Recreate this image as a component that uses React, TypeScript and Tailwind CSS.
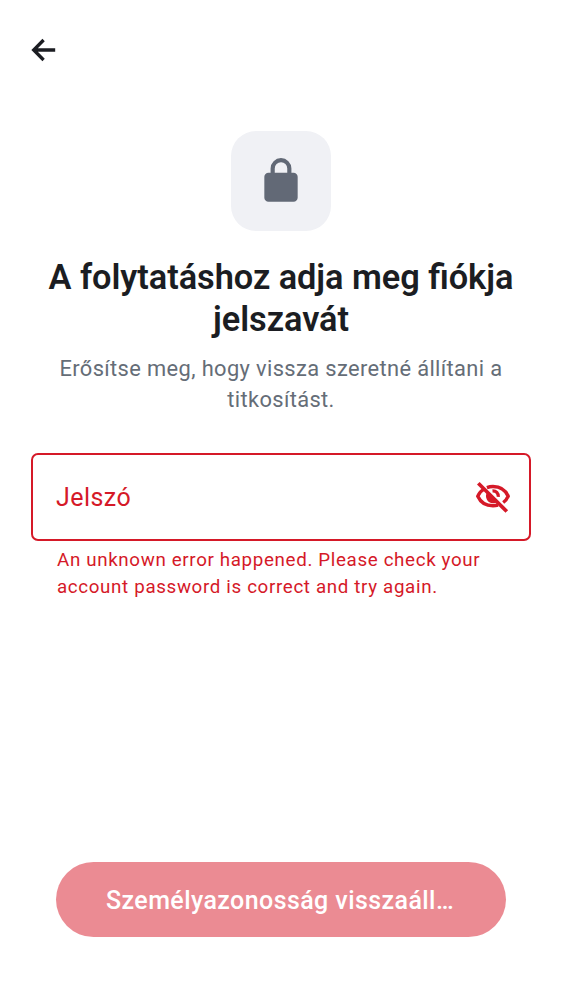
import { useState } from "react";

function BackIcon() {
  return (
    <svg width="38" height="38" viewBox="0 0 38 38" fill="none" stroke="currentColor" strokeWidth="3.3" strokeLinecap="butt" strokeLinejoin="miter" aria-hidden="true">
      <path d="M31.2 19H10M19.6 9 9.7 19l9.9 10" />
    </svg>
  );
}

function LockIcon() {
  return (
    <svg width="50" height="50" viewBox="0 0 24 24" fill="currentColor" aria-hidden="true">
      <path d="M6 22q-.825 0-1.412-.587A1.93 1.93 0 0 1 4 20V10q0-.825.588-1.412A1.93 1.93 0 0 1 6 8h1V6q0-2.075 1.463-3.537Q9.925 1 12 1t3.537 1.463Q17 3.925 17 6v2h1q.825 0 1.413.588Q20 9.175 20 10v10q0 .825-.587 1.413A1.93 1.93 0 0 1 18 22zM9 8h6V6q0-1.25-.875-2.125A2.9 2.9 0 0 0 12 3q-1.25 0-2.125.875A2.9 2.9 0 0 0 9 6z" />
    </svg>
  );
}

function HiddenIcon() {
  return (
    <svg width="38" height="38" viewBox="0 0 38 38" fill="none" stroke="currentColor" aria-hidden="true">
      <path strokeWidth="3.4" d="M10.3 10.9C7.2 12.7 5 15.2 3.8 18.2 6.4 24 12 27.7 19 27.7q2.6 0 5-.7M12.9 9.6Q15.8 8.5 19 8.5c7 0 12.6 3.8 15.2 9.7-1 2.5-2.7 4.6-5 6.3" />
      <path strokeWidth="3.2" d="M18.5 12.9c3.6-.2 6 2.4 5.8 6" />
      <path fill="currentColor" stroke="none" d="m13.2 14.3 10 9.8A7.2 7.2 0 0 1 19 25.3a7.1 7.1 0 0 1-5.8-11" />
      <path strokeWidth="3.7" d="M4.3 5.3 32.8 33.5" />
    </svg>
  );
}

export default function App() {
  const [visible, setVisible] = useState(false);
  const [password, setPassword] = useState("");
  return (
    <main className="flex h-screen w-full flex-col bg-white font-['Roboto',sans-serif]">
      <header className="pl-6 pt-[31px]">
        <button aria-label="Vissza" className="block text-[#1b1d22]"><BackIcon /></button>
      </header>
      <section className="mt-[62px] flex flex-col items-center text-center">
        <div className="flex size-[100px] items-center justify-center rounded-[25px] bg-[#f0f1f5] text-[#626976]"><LockIcon /></div>
        <h1 className="mt-[25px] text-[34.375px] leading-[42px] font-semibold tracking-[-0.06px] text-[#1b1d22] [font-variant-ligatures:common-ligatures]">
          A folytatáshoz adja meg <span className="tracking-normal">fiókja</span><br />jelszavát
        </h1>
        <p className="mt-[13px] text-[21.875px] leading-[31px] tracking-[0.37px] text-[#656d77]">
          Erősítse meg, hogy vissza szeretné állítani a<br />titkosítást.
        </p>
      </section>
      <div className="mx-[31px] mt-[38px] flex h-[88px] items-center rounded-[7px] border-2 border-[#d51928] pl-[23px] pr-[17px] text-[#d51928]">
        <input aria-label="Jelszó" placeholder="Jelszó" type={visible ? "text" : "password"} value={password} onChange={(e) => setPassword(e.target.value)} className="min-w-0 flex-1 bg-transparent pt-px text-[25px] tracking-[0.45px] outline-none placeholder:text-[#d51928]" />
        <button aria-label="Jelszó megjelenítése" onClick={() => setVisible(!visible)}><HiddenIcon /></button>
      </div>
      <p className="ml-[57px] mt-[6px] text-[18.75px] leading-[27px] tracking-[0.65px] text-[#d51928]">
        An unknown error happened. Please check your<br />account password is correct and try again.
      </p>
      <button disabled className="mx-14 mt-auto mb-[62.6px] h-[75px] rounded-full bg-[#eb8b93] pr-[2px] pt-px text-[25px] font-medium tracking-[0.42px] text-white">
        Személyazonosság visszaáll…
      </button>
    </main>
  );
}
